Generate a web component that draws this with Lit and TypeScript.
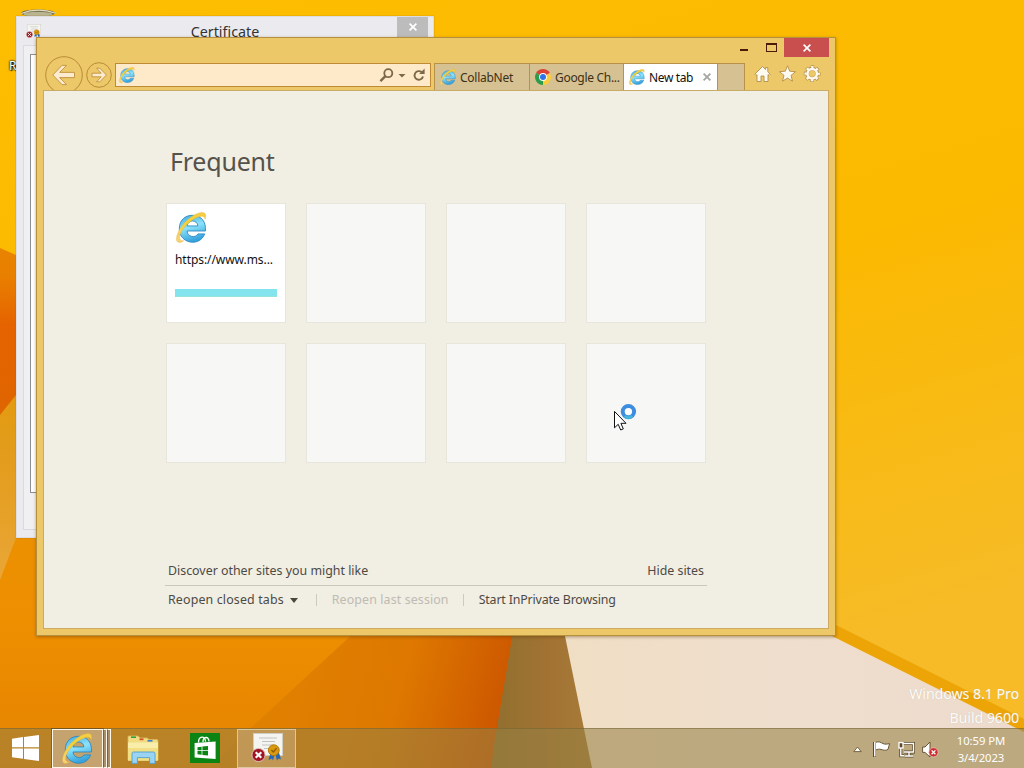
import { LitElement, html, css, svg } from "lit";
import { customElement } from "lit/decorators.js";

@customElement("ie-logo")
export class IeLogo extends LitElement {
  static styles = css`
    :host { display: block; flex: none; }
    svg { display: block; width: 100%; height: 100%; overflow: visible; }
  `;
  render() {
    return html`<svg viewBox="0 0 32 32">
      <defs>
        <linearGradient id="b" x1="0" y1="0" x2="0.3" y2="1">
          <stop offset="0" stop-color="#3fa8e0" /><stop offset="0.5" stop-color="#8ce2fa" /><stop offset="1" stop-color="#38a4dd" />
        </linearGradient>
        <linearGradient id="y" x1="0" y1="1" x2="1" y2="0">
          <stop offset="0" stop-color="#fad27a" /><stop offset="0.5" stop-color="#f3d232" /><stop offset="1" stop-color="#f6cc4a" />
        </linearGradient>
      </defs>
      <path fill="url(#b)" stroke="#2a86c0" stroke-width="0.9" fill-rule="evenodd"
        d="M30.4 19.6H11.4C11.8 26 20.3 27.2 22.6 22.6H29.6C24.4 36.6 3.2 32.6 3.4 17.4C3.4 7.6 10.2 3.4 17 3.4C26.4 3.4 31.2 10.4 30.4 19.6ZM11.5 14.4H22.6C22.2 7.6 12 7.6 11.5 14.4Z" />
      <path fill="url(#y)" stroke="#dcae35" stroke-width="0.4"
        d="M8 29.6C6 31.2 3.4 32 1.8 31C-0.6 29.4 0.6 23.4 4 17.6C9 9.2 18.6 1.6 26 0.6C30.4 0 31.6 3 30 7.4C29.8 4.6 27.4 3.6 23.4 5C15.6 7.6 7.6 15.6 4.6 22.4C2.8 26.8 3.6 30.4 8 29.6Z" />
    </svg>`;
  }
}

const wallpaper = svg`
  <defs>
    <linearGradient id="top" x1="0" y1="0" x2="0.4" y2="1">
      <stop offset="0" stop-color="#fdbd00" /><stop offset="0.55" stop-color="#fbb900" /><stop offset="1" stop-color="#f6bb26" />
    </linearGradient>
    <linearGradient id="red" x1="0" y1="0" x2="0" y2="1">
      <stop offset="0" stop-color="#e98300" /><stop offset="0.15" stop-color="#e97f00" /><stop offset="0.4" stop-color="#e56300" /><stop offset="1" stop-color="#dd6600" />
    </linearGradient>
    <linearGradient id="tan" x1="0" y1="0" x2="0" y2="1">
      <stop offset="0" stop-color="#e29a05" /><stop offset="0.45" stop-color="#e39c1c" /><stop offset="1" stop-color="#eaa83a" />
    </linearGradient>
    <linearGradient id="low" x1="0" y1="0" x2="0" y2="1">
      <stop offset="0" stop-color="#ea9100" /><stop offset="0.5" stop-color="#ee8f00" /><stop offset="1" stop-color="#e58300" />
    </linearGradient>
    <linearGradient id="deep" gradientUnits="userSpaceOnUse" x1="290" y1="660" x2="510" y2="720">
      <stop offset="0" stop-color="#e08000" /><stop offset="0.5" stop-color="#de7800" /><stop offset="1" stop-color="#cb5400" />
    </linearGradient>
    <linearGradient id="olive" gradientUnits="userSpaceOnUse" x1="500" y1="0" x2="585" y2="0">
      <stop offset="0" stop-color="#93702f" /><stop offset="0.6" stop-color="#a27333" /><stop offset="1" stop-color="#a77a38" />
    </linearGradient>
    <linearGradient id="cream" gradientUnits="userSpaceOnUse" x1="560" y1="0" x2="1000" y2="0">
      <stop offset="0" stop-color="#f0dec4" /><stop offset="0.5" stop-color="#efdecd" /><stop offset="1" stop-color="#eddccd" />
    </linearGradient>
  </defs>
  <rect width="1024" height="768" fill="url(#top)" />
  <path d="M0 248L16 255L60 275V440H0Z" fill="url(#red)" />
  <path d="M0 415L60 340V600H0Z" fill="url(#tan)" />
  <path d="M0 580L16 538L40 480V620H520V768H0Z" fill="url(#low)" />
  <path d="M370 618L240 738L210 768H510L530 600Z" fill="url(#deep)" />
  <path d="M515 620L494 745L491 768H600L560 610Z" fill="url(#olive)" />
  <path d="M561 616L565 636L592 768H1024V730L820 628Z" fill="url(#cream)" />
  <path d="M820 617L1024 719V732L820 630Z" fill="#eda406" />
`;

const certificateIcon = svg`
  <rect x="2.5" y="0.5" width="29" height="22" fill="#f4f4f0" stroke="#cfcdc4" />
  <path d="M8 5H26M11 8.5H24M11 12H22M13 15.5H19" stroke="#c2c4c2" />
  <path d="M20 18L17.5 27L21 25.5L22 27.5L24 20ZM24 20L26 27.5L27.5 25.5L30 26.5L27.5 18Z" fill="#2467b7" />
  <circle cx="22.8" cy="17.2" r="5.4" fill="#d99a10" stroke="#b87a08" />
  <path d="M20.4 17L22.4 19L25.6 15.2" stroke="#8d5c05" stroke-width="1.3" fill="none" />
  <circle cx="7.5" cy="22" r="6.6" fill="#a01423" stroke="#d9c7bb" stroke-width="1" />
  <path d="M4.7 19.2L10.3 24.8M10.3 19.2L4.7 24.8" stroke="#fff" stroke-width="2.1" />
`;

@customElement("app-root")
export class AppRoot extends LitElement {
  static styles = css`
    :host { display: block; position: relative; width: 1024px; height: 768px; overflow: hidden;
      font-family: "Noto Sans", "Open Sans", sans-serif; font-size: 13px; color: #111; }
    * { box-sizing: border-box; }
    svg { display: block; flex: none; overflow: visible; }
    .wall { position: absolute; inset: 0; }
    .bin { position: absolute; left: 8px; top: 9px; }
    .bin-label { position: absolute; left: 9px; top: 57px; font-size: 12px; line-height: 18px; color: #fff;
      text-shadow: 0 0 2px #000, 1px 1px 1px #000, 0 0 2px #000; }
    .mark { position: absolute; right: 5px; top: 682px; text-align: right; color: #fff; font-size: 14.2px;
      line-height: 24px; text-shadow: 0 0 1px #c9b9a5; opacity: .93; letter-spacing: -.06px; }

    .cert { position: absolute; left: 16px; top: 16px; width: 418px; height: 522px; background: #ebeaee;
      border: 1px solid #dedde2; padding: 0 5px 7px 6px; display: flex; flex-direction: column;
      box-shadow: 0 0 1px rgba(120,80,0,.5); }
    .cert-title { height: 28px; flex: none; display: grid; grid-template-columns: 32px 1fr 31px; }
    .cert-title svg.small { margin: 7px 0 0 3px; }
    .cert-title span { text-align: center; font-size: 14.3px; line-height: 29px; color: #333; padding-right: 2px; }
    .cert-close { background: #bcbcbc; height: 20px; display: grid; place-items: center; }
    .cert-body { flex: 1; border: 1px solid #d9d9e0; background: #f0f0f2; padding: 8px 6px 36px; }
    .cert-page { height: 100%; border: 1px solid #8c8e96; background: #fff; }

    .win { position: absolute; left: 36px; top: 37px; width: 800px; height: 599px; background: #ecc869;
      border: 1px solid #b58f3d; padding: 0 7px 7px; display: flex; flex-direction: column;
      box-shadow: 0 1px 3px rgba(90,55,0,.45); }
    .caption { height: 16px; flex: none; display: flex; justify-content: flex-end; position: relative; z-index: 1; margin-right: -1px; }
    .min { width: 8px; height: 2px; background: #4b1a08; margin: 11px 18px 0 0; }
    .max { width: 11px; height: 9px; border: 1px solid #4b1a08; border-top-width: 2px; margin: 5px 7px 0 0; }
    .close { width: 45px; height: 19px; flex: none; background: #c94f4f; display: grid; place-items: center; }
    .nav { height: 37px; flex: none; display: flex; overflow: hidden; margin: 0 -1px 0 0; }
    .back { margin: 2px 0 0 1px; }
    .fwd { margin: 8px 0 0 3px; }
    .addr { width: 316px; height: 24px; margin: 9px 0 0 3px; border: 1px solid #bd8a35; background: #fee9c9;
      display: flex; align-items: center; padding: 0 3px; }
    .addr .sp { flex: 1; }
    .tabs { display: flex; margin: 9px 0 0 3px; height: 28px; width: 311px; border: 1px solid #b8924a; border-bottom: 0; background: #d6c192; }
    .tab { width: 95px; display: flex; align-items: center; padding: 0 0 1px 5px; gap: 4px; border-right: 1px solid #b8924a; white-space: nowrap; font-size: 12px; color: #3c3016; flex: none; }
    .tab.second { width: 94px; padding-left: 5px; }
    .tab.on { background: #fff; color: #111; padding-left: 5px; width: 94px; }
    .t-collab { letter-spacing: -.26px; }
    .t-google { letter-spacing: -.3px; }
    .t-new { letter-spacing: -.36px; }
    .tab.on svg { margin-left: 6px; }
    .tools { display: flex; gap: 8px; margin: 11px 0 0 9px; }
    .i16 { width: 16px; height: 16px; }
    .i31 { width: 31px; height: 31px; }

    .page { flex: 1; background: #f1eee3; border: 1px solid #cda961; border-top-color: #c9ab68; margin: -1px -1px -1px -1px;
      padding: 52px 121px 0 121px; display: flex; flex-direction: column; color: #4d4a43; }
    h1 { margin: 0 0 0 5px; font-weight: 400; font-size: 25px; line-height: 36px; height: 36px; color: #55524b; letter-spacing: -.22px; }
    .tiles { display: grid; grid-template-columns: repeat(4, 120px); gap: 20px; grid-auto-rows: 120px; margin: 24px 0 0 1px; }
    .tile { background: #f7f7f6; border: 1px solid #e8e5dc; }
    .tile.site { background: #fff; padding: 8px 8px 0; color: #111; }
    .site ie-logo { margin-left: 1px; }
    .url { font-size: 12px; line-height: 16px; margin-top: 9px; white-space: nowrap; letter-spacing: -.06px; }
    .bar { height: 8px; background: #83e4ee; margin-top: 21px; border-bottom: 1px solid #96e3de; }
    .foot { margin-top: 97px; width: 542px; font-size: 12.4px; }
    .row { display: flex; align-items: center; height: 25px; padding: 0 3px; white-space: nowrap; line-height: 18px; }
    .row.first { border-bottom: 1px solid #cbc8bf; height: 26px; padding-bottom: 3px; justify-content: space-between; }
    .row.two { height: 28px; }
    .f3 { letter-spacing: .15px; }
    .f4 { letter-spacing: .12px; }
    .f5 { letter-spacing: -.16px; }
    .tri { width: 0; border: 4px solid transparent; border-top: 5px solid #4a473f; border-bottom: 0; margin-left: 6px; }
    .sep { width: 1px; height: 12px; background: #cbc9c1; margin: 0 15px 0 18px; }
    .sep.b { margin: 0 15px 0 14px; }
    .off { color: #bebbb3; }

    .bar-bottom { position: absolute; left: 0; top: 728px; width: 1024px; height: 40px; display: flex;
      background: rgba(150,128,68,.56); border-top: 1px solid rgba(110,95,45,.5); }
    .start { margin: 6px 0 0 12px; }
    .task-ie { margin-left: 13px; width: 51px; height: 39px; border: 1px solid #fff8e8; background: rgba(205,185,160,.6);
      display: flex; justify-content: center; align-items: center; outline: 1px solid rgba(80,55,20,.45); outline-offset: 0; }
    .stack { width: 4px; height: 39px; border: 1px solid #fff8e8; border-left-color: #7c6238; background: #a98e68; }
    .explorer { margin: 6px 0 0 16px; }
    .store { margin: 4px 0 0 31px; width: 30px; height: 30px; background: #0b8413; }
    .task-cert { margin-left: 17px; width: 59px; height: 39px; border: 1px solid #dcc79f; background: rgba(205,180,145,.45);
      padding: 3px 0 0 13px; }
    .tray { margin-left: auto; display: flex; align-items: center; }
    .clock { width: 78px; margin-left: 7px; text-align: center; color: #fff; font-size: 11.3px; line-height: 17px; padding-right: 8px; letter-spacing: -.08px; }
    .cursor { position: absolute; left: 612px; top: 402px; }
  `;

  render() {
    const emptyTiles = Array.from({ length: 7 });
    return html`
      <svg class="wall" width="1024" height="768">${wallpaper}</svg>
      <svg class="bin" width="56" height="12" viewBox="0 0 56 12">
        <ellipse cx="30" cy="4" rx="17" ry="3.6" fill="#6d6a4d" />
        <ellipse cx="30" cy="5.2" rx="14.5" ry="2.4" fill="#b9b38e" />
        <path d="M13 4.5Q30 -2 47 4" stroke="#e3ddc0" fill="none" stroke-width="1.1" />
      </svg>
      <div class="bin-label">R</div>

      <section class="cert">
        <div class="cert-title">
          <svg class="small" width="15" height="14" viewBox="0 0 32 29">${certificateIcon}</svg>
          <span>Certificate</span>
          <div class="cert-close">
            <svg width="8" height="8" viewBox="0 0 8 8"><path d="M.6 .6L7.4 7.4M7.4 .6L.6 7.4" stroke="#fff" stroke-width="1.7" /></svg>
          </div>
        </div>
        <div class="cert-body"><div class="cert-page"></div></div>
      </section>

      <section class="win">
        <div class="caption">
          <div class="min"></div><div class="max"></div>
          <div class="close">
            <svg width="8" height="8" viewBox="0 0 8 8"><path d="M.6 .6L7.4 7.4M7.4 .6L.6 7.4" stroke="#fff" stroke-width="1.6" /></svg>
          </div>
        </div>
        <div class="nav">
          <svg class="back" width="38" height="38" viewBox="0 0 38 38" fill="none">
            <circle cx="19" cy="19" r="18.3" stroke="#b98c35" />
            <path d="M7.8 19L17 9.4H21.5L14.6 16.4H29.5V21.6H14.6L21.5 28.6H17Z" fill="#fdebd0" stroke="#c1913c" stroke-width="0.9" />
          </svg>
          <svg class="fwd" width="26" height="26" viewBox="0 0 26 26" fill="none">
            <circle cx="13" cy="13" r="12.3" stroke="#b98c35" />
            <path d="M20.4 13L13.8 6.2H10.6L15.2 11.2H6V14.8H15.2L10.6 19.8H13.8Z" fill="#fdebd0" stroke="#c1913c" stroke-width="0.9" />
          </svg>
          <div class="addr">
            <ie-logo class="i16"></ie-logo><span class="sp"></span>
            <svg width="49" height="16" viewBox="0 0 49 16" fill="none" stroke="#7b6848">
              <circle cx="10.3" cy="6.2" r="4" stroke-width="1.8" /><path d="M7.4 9.2L2.4 14.2" stroke-width="2.4" />
              <path d="M20.5 7H27.5L24 10.5Z" fill="#7b6848" stroke="none" />
              <path d="M43.6 5.1A4.3 4.3 0 1 0 45 9.5" stroke-width="1.9" /><path d="M41.2 7H46.6V1.6Z" fill="#7b6848" stroke="none" />
            </svg>
          </div>
          <div class="tabs">
            <div class="tab"><ie-logo class="i16"></ie-logo><span class="t-collab">CollabNet</span></div>
            <div class="tab second">
              <svg width="16" height="16" viewBox="0 0 16 16">
                <path d="M8 8L1.1 4A8 8 0 0 1 14.9 4Z" fill="#dc4335" />
                <path d="M8 8L14.9 4A8 8 0 0 1 8 16Z" fill="#fccc3a" />
                <path d="M8 8L8 16A8 8 0 0 1 1.1 4Z" fill="#2d9c4b" />
                <circle cx="8" cy="8" r="3.9" fill="#fff" /><circle cx="8" cy="8" r="3" fill="#2f74e8" />
              </svg>
              <span class="t-google">Google Ch...</span>
            </div>
            <div class="tab on">
              <ie-logo class="i16"></ie-logo><span class="t-new">New tab</span>
              <svg width="8" height="8" viewBox="0 0 8 8"><path d="M.6 .6L7.4 7.4M7.4 .6L.6 7.4" stroke="#a5a5a2" stroke-width="1.8" /></svg>
            </div>
          </div>
          <div class="tools">
            <svg width="17" height="18" viewBox="0 0 17 18"><path d="M8.5 1.5L.8 9.2L2 10.4L3 9.6V16.5H7V11H10V16.5H14V9.6L15 10.4L16.2 9.2L13.8 6.7V2.5H11.6V4.6Z" fill="#fffaf0" stroke="#b38e4c" stroke-width="0.9" /></svg>
            <svg width="17" height="18" viewBox="0 0 17 18"><path d="M8.5 .8L10.7 6.2L16.5 6.7L12 10.4L13.5 16.2L8.5 13L3.5 16.2L5 10.4L.5 6.7L6.3 6.2Z" fill="#fffaf0" stroke="#b38e4c" stroke-width="0.9" /></svg>
            <svg width="17" height="18" viewBox="0 0 17 18" fill="none">
              <g stroke="#b38e4c"><circle cx="8.2" cy="8.7" r="5" stroke-width="3.8" /><circle cx="8.2" cy="8.7" r="6.6" stroke-width="3.6" stroke-dasharray="3.1 2.08" stroke-dashoffset="1.5" /></g>
              <g stroke="#fffaf0"><circle cx="8.2" cy="8.7" r="4.7" stroke-width="2.5" /><circle cx="8.2" cy="8.7" r="6.6" stroke-width="2.2" stroke-dasharray="2.4 2.78" stroke-dashoffset="1.2" /></g>
            </svg>
          </div>
        </div>
        <main class="page">
          <h1>Frequent</h1>
          <div class="tiles">
            <div class="tile site">
              <ie-logo class="i31"></ie-logo>
              <div class="url">https://www.ms...</div>
              <div class="bar"></div>
            </div>
            ${emptyTiles.map(() => html`<div class="tile"></div>`)}
          </div>
          <div class="foot">
            <div class="row first"><span class="f1">Discover other sites you might like</span><span class="f2">Hide sites</span></div>
            <div class="row two">
              <span class="f3">Reopen closed tabs</span><i class="tri"></i><i class="sep"></i>
              <span class="f4 off">Reopen last session</span><i class="sep b"></i>
              <span class="f5">Start InPrivate Browsing</span>
            </div>
          </div>
        </main>
      </section>

      <div class="mark">Windows 8.1 Pro<br />Build 9600</div>

      <footer class="bar-bottom">
        <svg class="start" width="27" height="26" viewBox="0 0 27 26" fill="#fff">
          <path d="M0 3.7L11 2.1V12.3H0ZM12 1.9L27 0V12.3H12ZM0 13.4H11V23.8L0 22.2ZM12 13.4H27V26L12 24Z" />
        </svg>
        <div class="task-ie"><ie-logo class="i31"></ie-logo></div>
        <div class="stack"></div><div class="stack"></div>
        <svg class="explorer" width="32" height="29" viewBox="0 0 32 29">
          <path d="M1 4V2Q1 1 2 1H11L13 3H20L22 4.5H30Q31 4.5 31 6V25H1Z" fill="#f1dc83" stroke="#d7b95a" stroke-width="0.8" />
          <rect x="4" y="1.4" width="5" height="1.6" fill="#2f9e49" /><rect x="12.5" y="3.4" width="4" height="1.8" fill="#d5502d" /><rect x="20.5" y="5" width="5" height="1.6" fill="#3c7fc4" />
          <path d="M1 7.5H31V25.5H1Z" fill="#f8eda9" /><path d="M1 13H31V25.5H1Z" fill="#f0df84" />
          <path d="M5 28.4V18.5Q5 17 6.5 17H26.5Q28 17 28 18.5V28.4H22.6V22.6H10.4V28.4Z" fill="#9bd3f2" stroke="#4fa0d3" stroke-width="0.9" />
        </svg>
        <svg class="store" viewBox="0 0 30 30">
          <path d="M4 9L25 7.5V25L4 23.5Z" fill="#fff" transform="translate(0.6 1)" />
          <path d="M8.5 9.5C8.5 3 15 2 15.6 8.6M13 9C13 3.6 18.6 2.6 19 8.4" fill="none" stroke="#fff" stroke-width="1.3" />
          <path d="M7.5 14.2L11.6 13.7V17.3H7.5ZM12.4 13.6L18 13V17.3H12.4ZM7.5 18.1H11.6V21.8L7.5 21.3ZM12.4 18.1H18V22.5L12.4 21.9Z" fill="#0b8413" />
        </svg>
        <div class="task-cert"><svg width="32" height="29" viewBox="0 0 32 29">${certificateIcon}</svg></div>

        <div class="tray">
          <svg width="86" height="20" viewBox="0 0 86 20">
            <path d="M.8 12.6L4.5 8L8.2 12.6Z" fill="#fff" stroke="#6f5a38" stroke-width="0.9" />
            <path d="M21.5 3V18" stroke="#5d4a2a" stroke-width="3" /><path d="M22.5 3.4C26 2 28 3.5 30 4.6C32 5.4 34 5.2 36.6 4.6L35 10.4C32.6 12 30 11 28 10.4C26 9.8 24.6 10.4 22.5 11Z" fill="#fff" stroke="#5d4a2a" stroke-width="0.9" /><path d="M21.8 3V17.6" stroke="#fff" stroke-width="1.5" />
            <g fill="none"><path d="M50 4.5H60.5V13H51M56 13V16.5M51.5 17H60.5M47.8 9V16.8H51" stroke="#5d4a2a" stroke-width="3" /><path d="M50 4.5H60.5V13H51M56 13V16.5M51.5 17H60.5M47.8 9V16.8H51" stroke="#fff" stroke-width="1.4" /><rect x="46" y="3.6" width="4" height="5.4" stroke="#fff" fill="#5d4a2a" stroke-width="1.3" /></g>
            <path d="M69.6 8H72L77 3V18L72 13.4H69.6Z" fill="#fff" stroke="#5d4a2a" stroke-width="0.9" />
            <circle cx="80.5" cy="13.3" r="4.6" fill="#cb2f31" stroke="#f0c7b8" stroke-width="0.7" /><path d="M78.6 11.4L82.4 15.2M82.4 11.4L78.6 15.2" stroke="#fff" stroke-width="1.3" />
          </svg>
          <div class="clock"><span class="c1">10:59 PM</span><br /><span class="c2">3/4/2023</span></div>
        </div>
      </footer>

      <svg class="cursor" width="26" height="32" viewBox="0 0 26 32">
        <circle cx="16.4" cy="9.6" r="5.7" fill="#fff" stroke="#3d8de0" stroke-width="4" />
        <path d="M12.6 14Q16.4 17.4 20.2 14" stroke="#45b6d8" stroke-width="3" fill="none" />
        <path d="M2.5 9.4V25.8L6.2 22.3L8.7 28L11.3 26.9L8.9 21.3H14Z" fill="#fff" stroke="#111" stroke-width="1" />
      </svg>
    `;
  }
}
